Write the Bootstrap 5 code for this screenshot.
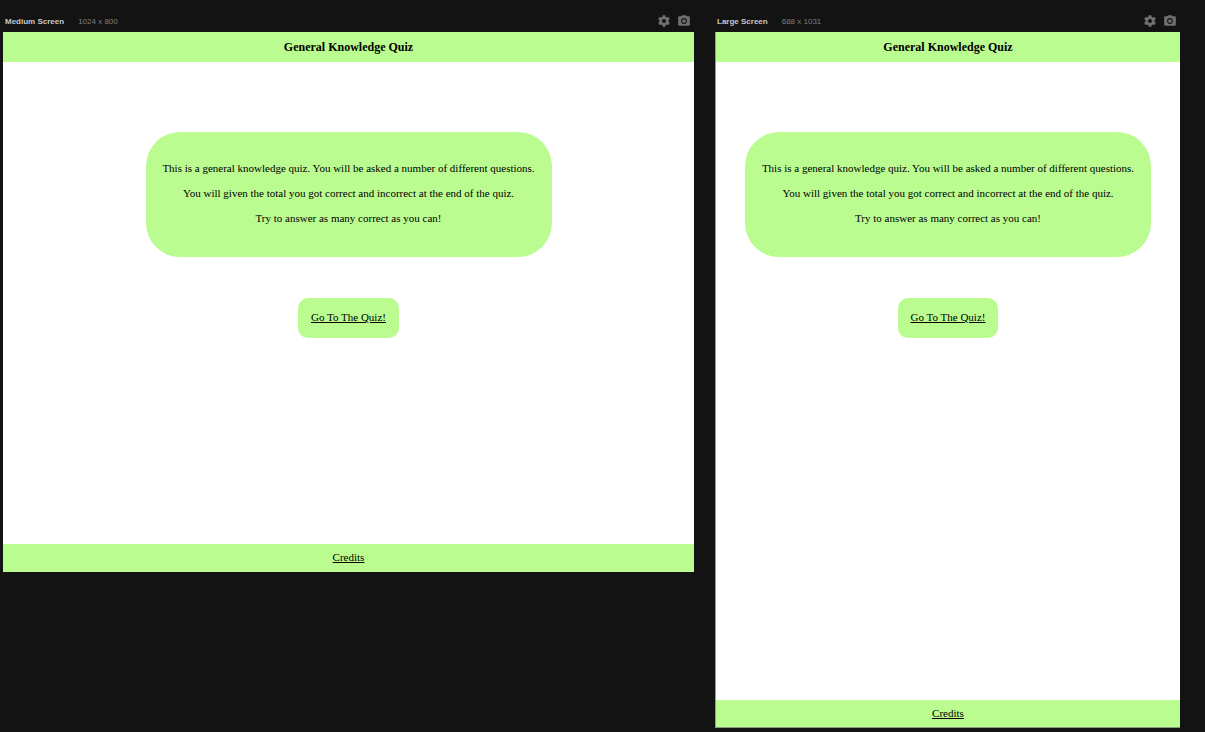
<!DOCTYPE html>
<html lang="en">
<head>
<meta charset="utf-8">
<meta name="viewport" content="width=device-width, initial-scale=1">
<title>General Knowledge Quiz</title>
<link href="https://cdn.jsdelivr.net/npm/bootstrap@5.3.0/dist/css/bootstrap.min.css" rel="stylesheet">
<style>
  body { background: #131313; overflow-x: hidden; }
  .boards { display: grid; grid-template-columns: 691fr 465fr; gap: 21px; padding: 12px 25px 4px 3px; align-items: start; }
  .board-bar { height: 20px; padding: 0 3px 0 2px; font: 8px/20px "Liberation Sans", sans-serif; color: #808080; }
  .board-bar h2 { font: bold 8px/20px "Liberation Sans", sans-serif; color: #c8c8c8; margin: 0 14px 0 0; white-space: nowrap; }
  .tools { gap: 6px; padding-top: 2px; }
  .tool { padding: 0; border: 0; background: none; color: #707070; line-height: 0; }
  .tool svg { width: 14px; height: 14px; fill: currentColor; }
  .device { background: #fff; color: #000; font: 11px/12px "Liberation Serif", serif; }
  .medium { aspect-ratio: 691 / 540; }
  .large { aspect-ratio: 465 / 696; border-left: 1px solid #999; }
  .green { background: #bafc90; }
  .device h1 { font: bold 12px/14px "Liberation Serif", serif; margin: 0; padding: 8px 0; }
  .device a { color: #000; text-decoration: underline; }
  .intro { margin-top: 70px; padding: 30px 16px 33px; border-radius: 34px; width: 406px; max-width: 100%; }
  .intro p { margin: 0 0 13px; }
  .intro p:last-child { margin: 0; }
  .start { margin-top: 41px; padding: 13px 13px 15px; border-radius: 10px; }
  .credits { padding: 7px 0 8px; border-bottom: 1px solid transparent; }
  .large .credits { border-color: #8a9a80; }
</style>
</head>
<body>
<svg class="d-none" xmlns="http://www.w3.org/2000/svg">
  <symbol id="gear" viewBox="0 0 24 24"><path d="M19.4 13c0-.3.1-.6.1-1s0-.7-.1-1l2.1-1.700c.2-.1.300-.4.100-.6l-2-3.500c-.1-.2-.4-.3-.6-.2l-2.500 1c-.5-.4-1.100-.7-1.700-1l-.4-2.600c0-.2-.2-.4-.4-.4h-4c-.3 0-.5.2-.5.4l-.4 2.600c-.6.3-1.200.6-1.700 1L4.900 5c-.2-.1-.5 0-.6.2l-2 3.500c-.1.200-.1.500.1.600L4.500 11c0 .3-.1.6-.1 1s0 .7.100 1l-2.100 1.700c-.2.100-.2.400-.1.600l2 3.500c.1.200.4.300.6.200l2.500-1c.5.4 1.100.7 1.700 1l.4 2.600c0 .2.200.4.500.4h4c.2 0 .5-.2.500-.4l.4-2.600c.6-.3 1.100-.6 1.700-1l2.500 1c.2.100.5 0 .6-.2l2-3.500c.1-.2.100-.5-.1-.6zM12 15.500a3.500 3.500 0 1 1 0-7 3.500 3.500 0 0 1 0 7z"/></symbol>
  <symbol id="camera" viewBox="0 0 24 24"><circle cx="12" cy="12" r="3.200"/><path d="M9 2 7.200 4H4c-1.100 0-2 .9-2 2v12c0 1.100.9 2 2 2h16c1.100 0 2-.9 2-2V6c0-1.100-.9-2-2-2h-3.200L15 2zm3 15a5 5 0 1 1 0-10 5 5 0 0 1 0 10z"/></symbol>
</svg>
<main class="boards">
  <section>
    <div class="board-bar d-flex">
      <h2>Medium Screen</h2><span>1024 x 800</span>
      <div class="ms-auto d-flex align-items-start tools">
        <button class="tool" type="button" aria-label="Screen settings"><svg><use href="#gear"/></svg></button>
        <button class="tool" type="button" aria-label="Take screenshot"><svg><use href="#camera"/></svg></button>
      </div>
    </div>
    <div class="device medium d-flex flex-column align-items-center text-center">
      <header class="green w-100"><h1>General Knowledge Quiz</h1></header>
      <div class="intro green">
        <p>This is a general knowledge quiz. You will be asked a number of different questions.</p>
        <p>You will given the total you got correct and incorrect at the end of the quiz.</p>
        <p>Try to answer as many correct as you can!</p>
      </div>
      <a class="start green" href="#quiz">Go To The Quiz!</a>
      <footer class="credits green w-100 mt-auto"><a href="#credits">Credits</a></footer>
    </div>
  </section>
  <section>
    <div class="board-bar d-flex">
      <h2>Large Screen</h2><span>688 x 1031</span>
      <div class="ms-auto d-flex align-items-start tools">
        <button class="tool" type="button" aria-label="Screen settings"><svg><use href="#gear"/></svg></button>
        <button class="tool" type="button" aria-label="Take screenshot"><svg><use href="#camera"/></svg></button>
      </div>
    </div>
    <div class="device large d-flex flex-column align-items-center text-center">
      <header class="green w-100"><h1>General Knowledge Quiz</h1></header>
      <div class="intro green">
        <p>This is a general knowledge quiz. You will be asked a number of different questions.</p>
        <p>You will given the total you got correct and incorrect at the end of the quiz.</p>
        <p>Try to answer as many correct as you can!</p>
      </div>
      <a class="start green" href="#quiz">Go To The Quiz!</a>
      <footer class="credits green w-100 mt-auto"><a href="#credits">Credits</a></footer>
    </div>
  </section>
</main>
<script src="https://cdn.jsdelivr.net/npm/bootstrap@5.3.0/dist/js/bootstrap.bundle.min.js"></script>
</body>
</html>
